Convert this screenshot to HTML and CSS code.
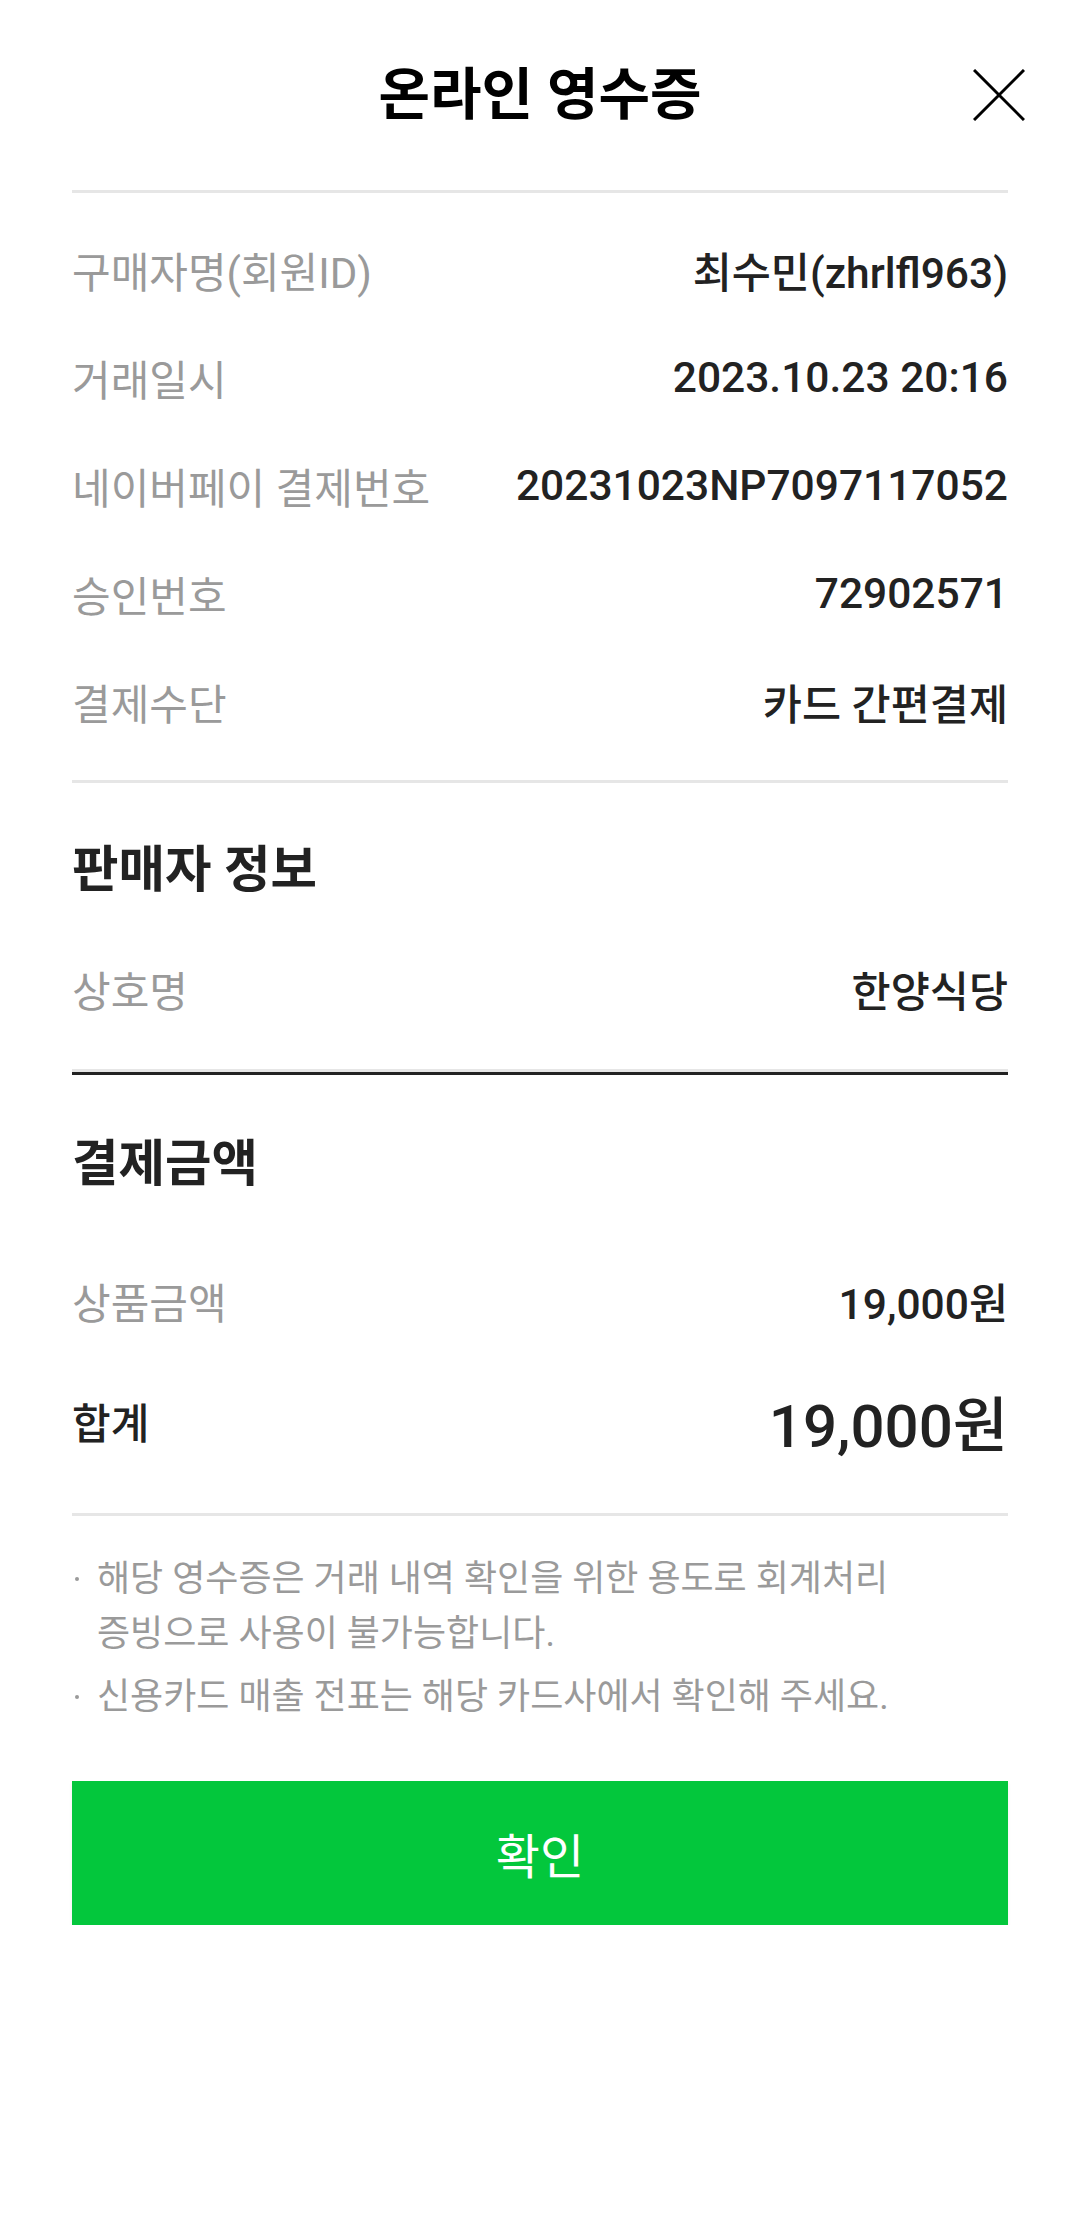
FILE: index.html
```html
<!DOCTYPE html>
<html lang="ko">
<head>
<meta charset="utf-8">
<title>온라인 영수증</title>
<link rel="stylesheet" href="styles.css">
</head>
<body>
<div class="page">
  <header class="header">
    <span></span>
    <h1 class="title">온라인 영수증</h1>
    <button class="close" aria-label="닫기">
      <svg viewBox="0 0 52 52" width="52" height="52"><path d="M1 1 L51 51 M51 1 L1 51" stroke="#000" stroke-width="3" fill="none"/></svg>
    </button>
  </header>

  <div class="content">
    <section class="section info">
      <div class="row"><span class="label">구매자명(회원ID)</span><span class="value">최수민(zhrlfl963)</span></div>
      <div class="row"><span class="label">거래일시</span><span class="value">2023.10.23 20:16</span></div>
      <div class="row"><span class="label">네이버페이 결제번호</span><span class="value">20231023NP7097117052</span></div>
      <div class="row"><span class="label">승인번호</span><span class="value">72902571</span></div>
      <div class="row"><span class="label">결제수단</span><span class="value">카드 간편결제</span></div>
    </section>

    <section class="section seller">
      <h2 class="heading">판매자 정보</h2>
      <div class="row"><span class="label">상호명</span><span class="value">한양식당</span></div>
    </section>

    <section class="section pay">
      <h2 class="heading">결제금액</h2>
      <div class="row"><span class="label">상품금액</span><span class="value">19,000원</span></div>
      <div class="row total"><span class="label">합계</span><span class="value">19,000원</span></div>
    </section>

    <section class="notes">
      <p class="note">해당 영수증은 거래 내역 확인을 위한 용도로 회계처리 증빙으로 사용이 불가능합니다.</p>
      <p class="note">신용카드 매출 전표는 해당 카드사에서 확인해 주세요.</p>
    </section>

    <button class="confirm">확인</button>
  </div>
</div>
</body>
</html>
```

FILE: styles.css
```css
* { box-sizing: border-box; }
html, body { margin: 0; padding: 0; background: #fff; }
body {
  font-family: Roboto, "Noto Sans CJK KR", "Noto Sans", sans-serif;
  color: #222;
}
.page { width: 1080px; }

.header {
  height: 190px;
  display: grid;
  grid-template-columns: 1fr auto 1fr;
  align-items: center;
}
.title {
  margin: 0;
  font-size: 56px;
  font-weight: 700;
  color: #000;
  line-height: 64px;
}
.close {
  justify-self: end;
  margin-right: 55px;
  width: 52px;
  height: 52px;
  padding: 0;
  border: 0;
  background: none;
  display: flex;
}

.content {
  padding: 0 72px;
}

.section { border-top: 3px solid #e6e6e6; }
.info { padding: 22px 0 25px; }
.seller { padding: 57px 0 27px; }
.pay {
  border-top: 0;
  padding: 65px 0 27px;
  box-shadow: inset 0 3px 0 #e6e6e6, inset 0 6px 0 #222;
}

.row {
  height: 108px;
  display: flex;
  align-items: center;
  justify-content: space-between;
}
.label {
  font-size: 42px;
  color: #9a9a9a;
}
.value {
  font-size: 42.5px;
  font-weight: 500;
  color: #222;
}
.heading {
  margin: 0;
  font-size: 50.5px;
  font-weight: 700;
  line-height: 60px;
  color: #222;
}
.seller .heading { margin-bottom: 34px; }
.pay .heading { margin-bottom: 52px; }

.total { height: 132px; }
.total .label { color: #222; font-weight: 500; font-size: 42px; }
.total .value { font-size: 60px; font-weight: 500; }

.notes {
  border-top: 3px solid #e6e6e6;
  padding-top: 36px;
}
.note {
  position: relative;
  margin: 0 0 8px;
  padding-left: 25px;
  padding-right: 80px;
  font-size: 36px;
  line-height: 55px;
  color: #9a9a9a;
}
.note::before {
  content: "";
  position: absolute;
  left: 3px;
  top: 25px;
  width: 4px;
  height: 4px;
  border-radius: 50%;
  background: #9a9a9a;
}

.confirm {
  display: block;
  width: 100%;
  height: 144px;
  margin-top: 56px;
  border: 0;
  background: #03c73c;
  color: #fff;
  font-family: Roboto, "Noto Sans CJK KR", sans-serif;
  font-size: 48px;
  font-weight: 400;
  box-shadow: 0 3px 4px rgba(0,0,0,0.06);
}
```
